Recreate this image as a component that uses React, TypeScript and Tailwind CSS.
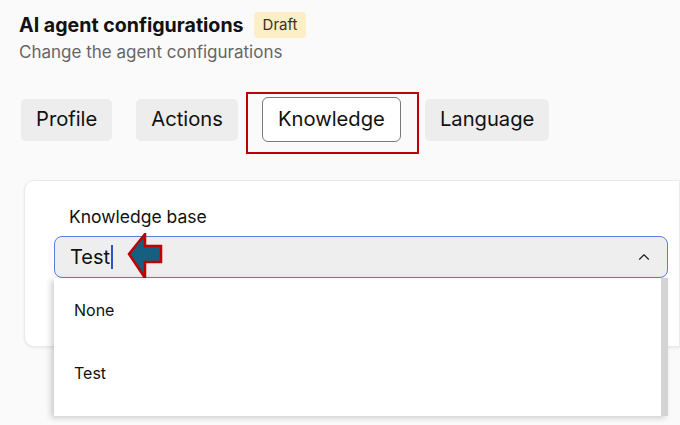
import { ChevronUp } from "lucide-react"

const tabs = ["Profile", "Actions", "Knowledge", "Language"]

export default function App() {
  return (
    <div className="w-[680px] h-[425px] overflow-hidden bg-[#fafafa] font-['Inter',sans-serif] text-[#111]">
      <header className="pl-[19px] pt-[12px]">
        <div className="flex h-[26px] items-center gap-[10px]">
          <h1 className="text-[19.6px] font-bold leading-[26px]">AI agent configurations</h1>
          <span className="rounded-[4px] bg-[#fcefc6] px-[9px] text-[15px] leading-[26px] text-[#3a3320]">Draft</span>
        </div>
        <p className="mt-[2px] text-[17px] leading-[24px] text-[#666]">Change the agent configurations</p>
      </header>

      <nav className="mt-[33px] flex h-[45px] items-center gap-[24px] pl-[21px]">
        {tabs.map((t) =>
          t === "Knowledge" ? (
            <div key={t} className="relative">
              <button className="h-[45px] rounded-[6px] border border-[#7a7a7a] bg-white px-[15px] text-[20.2px] leading-none">
                {t}
              </button>
              <div className="pointer-events-none absolute left-[-16px] right-[-18px] top-[-5px] bottom-[-12px] border-2 border-[#c00000]" />
            </div>
          ) : (
            <button key={t} className="h-[42px] rounded-[5px] bg-[#ededed] px-[15px] text-[20.2px] leading-none">
              {t}
            </button>
          )
        )}
      </nav>

      <section className="relative ml-[24px] mt-[38px] h-[167px] rounded-l-[10px] border border-[#ebebeb] bg-white pl-[29px] pt-[24px] shadow-[0_1px_3px_rgba(0,0,0,0.08)]">
        <label className="ml-[15px] block text-[17.5px] leading-[24px]">Knowledge base</label>
        <div className="relative mt-[7px] w-[614px]">
          <div className="flex h-[42px] items-center rounded-[8px] border border-[#5b7fd6] bg-[#eeeeee] pl-[15px] pr-[14px]">
            <span className="text-[20px] leading-none">Test</span>
            <span className="ml-[1px] h-[24px] w-[1.5px] bg-[#2f54c7]" />
            <ChevronUp className="ml-auto h-[18px] w-[18px] text-[#222]" strokeWidth={1.5} />
          </div>
          <svg className="absolute left-[73px] top-[-3px]" width="38" height="48" viewBox="0 0 38 48">
            <polygon
              points="2,21 18,1 18,13 34,13 34,29 18,29 18,45"
              fill="#175f80"
              stroke="#c00000"
              strokeWidth="2.5"
            />
          </svg>
          <ul className="absolute left-0 top-[42px] z-10 flex h-[138px] w-[614px] bg-white shadow-[-3px_2px_6px_rgba(0,0,0,0.18)]">
            <div className="flex-1">
              <li className="flex h-[63px] items-center pl-[20px] text-[16px]">None</li>
              <li className="flex h-[63px] items-center pl-[20px] text-[16px]">Test</li>
            </div>
            <div className="w-[7px] bg-[#d4d4d4]" />
          </ul>
        </div>
      </section>
    </div>
  )
}
